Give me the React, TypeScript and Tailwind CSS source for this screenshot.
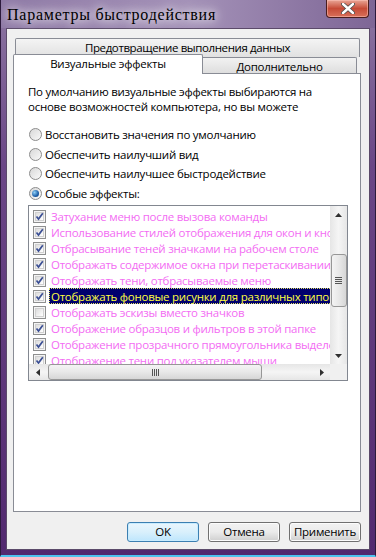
import React from "react";

const items: { text: string; checked: boolean; selected?: boolean }[] = [
  { text: "Затухание меню после вызова команды", checked: true },
  { text: "Использование стилей отображения для окон и кнопок", checked: true },
  { text: "Отбрасывание теней значками на рабочем столе", checked: true },
  { text: "Отображать содержимое окна при перетаскивании", checked: true },
  { text: "Отображать тени, отбрасываемые меню", checked: true },
  { text: "Отображать фоновые рисунки для различных типов папок", checked: true, selected: true },
  { text: "Отображать эскизы вместо значков", checked: false },
  { text: "Отображение образцов и фильтров в этой папке", checked: true },
  { text: "Отображение прозрачного прямоугольника выделения", checked: true },
  { text: "Отображение тени под указателем мыши", checked: true },
];

function CheckBox({ checked }: { checked: boolean }) {
  return (
    <div className="w-[13px] h-[13px] shrink-0 border border-[#8e8f8f] bg-[#f4f4f4] p-[1px]">
      <div className="w-full h-full bg-gradient-to-br from-[#dcdcdc] to-[#ffffff] border border-[#d0d0d0] relative">
        {checked && (
          <svg viewBox="0 0 9 9" className="absolute -left-[1px] -top-[1px] w-[9px] h-[9px]">
            <path d="M1.5 4.5 L3.5 7 L7.8 1.2" fill="none" stroke="#3b4f94" strokeWidth="1.7" />
          </svg>
        )}
      </div>
    </div>
  );
}

function Radio({ checked }: { checked: boolean }) {
  return (
    <div className="w-[13px] h-[13px] shrink-0 rounded-full border border-[#8c8c8c] bg-gradient-to-br from-[#d8d8d8] to-[#fafafa] flex items-center justify-center">
      {checked && (
        <div className="w-[7px] h-[7px] rounded-full bg-[radial-gradient(circle_at_35%_35%,#8fd0f7,#1d5fa8_60%,#0b3c7a)]" />
      )}
    </div>
  );
}

function Tri({ dir }: { dir: "up" | "down" | "left" | "right" }) {
  const pts =
    dir === "up"
      ? "0,4 3.5,0 7,4"
      : dir === "down"
      ? "0,0 3.5,4 7,0"
      : dir === "left"
      ? "4,0 0,3.5 4,7"
      : "0,0 4,3.5 0,7";
  const isV = dir === "up" || dir === "down";
  return (
    <svg viewBox={isV ? "0 0 7 4" : "0 0 4 7"} className={isV ? "w-[7px] h-[4px]" : "w-[4px] h-[7px]"}>
      <polygon points={pts} fill="#303030" />
    </svg>
  );
}

function WinButton({ label, def }: { label: string; def?: boolean }) {
  return (
    <div
      className={
        "w-[72px] h-[20px] rounded-[3px] border flex items-center justify-center text-black " +
        (def
          ? "border-[#3c7fb1] bg-gradient-to-b from-[#eaf6fd] via-[#d9f0fc] to-[#bee6fd] shadow-[inset_0_0_0_1px_#c8ecff]"
          : "border-[#707070] bg-gradient-to-b from-[#f2f2f2] via-[#ebebeb] to-[#cfcfcf] shadow-[inset_0_0_0_1px_#fcfcfc]")
      }
    >
      {label}
    </div>
  );
}

export default function App() {
  return (
    <div
      className="w-[376px] h-[557px] flex flex-col overflow-hidden bg-gradient-to-b from-[#8d77a2] via-[#6a4686] via-30% to-[#52296f] border-l border-r border-[#2c1a3c] border-b-[2px] border-b-[#4ec4ee]"
      style={{ fontFamily: '"Open Sans", "Noto Sans", sans-serif' }}
    >
      {/* Title bar */}
      <div className="h-[28px] shrink-0 flex items-start relative bg-gradient-to-r from-[#8f7aa6] via-[#a492b8] to-[#7e6696]">
        <div
          className="pl-[6px] pt-[6px] text-[16px] leading-[18px] text-black tracking-[0.75px] [text-shadow:0_0_8px_#ffffff,0_0_14px_#ffffff]"
          style={{ fontFamily: '"Liberation Serif", serif' }}
        >
          Параметры быстродействия
        </div>
        <div className="flex-1" />
        <div className="mr-[6px] w-[43px] h-[18px] rounded-b-[4px] border border-t-0 border-[#4a1d1d] bg-gradient-to-b from-[#e8a596] via-[#c64a36] to-[#d8705a] flex items-center justify-center shadow-[inset_0_0_0_1px_rgba(255,200,190,0.5)]">
          <svg viewBox="0 0 14 11" className="w-[14px] h-[11px]">
            <path d="M2 1 L12 10 M12 1 L2 10" stroke="#4a4a4a" strokeWidth="4" strokeLinecap="round" />
            <path d="M2 1 L12 10 M12 1 L2 10" stroke="#ffffff" strokeWidth="2.4" strokeLinecap="round" />
          </svg>
        </div>
      </div>

      {/* Client area */}
      <div className="mx-[5px] h-[522px] shrink-0 border border-[#5b4a6a] bg-[#f0f0f0] flex flex-col pt-[9px] pl-[6px] pr-[8px] text-[11.5px] tracking-[-0.25px] text-black">
        {/* Tabs */}
        <div className="flex flex-col">
          <div className="ml-[2px] mr-[1px] h-[19px] border border-[#898c95] border-b-0 rounded-t-[2px] bg-gradient-to-b from-[#f4f4f4] to-[#e1e1e1] flex justify-center pt-[1px] leading-[16px] tracking-[-0.4px]">
            Предотвращение выполнения данных
          </div>
          <div className="flex items-end h-[16px]">
            <div className="relative z-10 w-[190px] h-[20px] -mb-[1px] bg-white border border-b-0 border-[#898c95] rounded-t-[2px] flex justify-center pt-[1px] leading-[16px]">
              Визуальные эффекты
            </div>
            <div className="w-[154px] h-[16px] border-t border-r border-[#898c95] rounded-tr-[2px] bg-gradient-to-b from-[#f2f2f2] to-[#dedede] flex justify-center leading-[16px] pt-[1px]">
              Дополнительно
            </div>
          </div>
        </div>

        {/* Panel */}
        <div className="h-[439px] shrink-0 border border-[#898c95] bg-white pl-[14px] pt-[10px] flex flex-col">
          <div className="leading-[15px]">
            <div>По умолчанию визуальные эффекты выбираются на</div>
            <div>основе возможностей компьютера, но вы можете</div>
          </div>
          <div className="mt-[11px] flex flex-col">
            {[
              ["Восстановить значения по умолчанию", false],
              ["Обеспечить наилучший вид", false],
              ["Обеспечить наилучшее быстродействие", false],
              ["Особые эффекты:", true],
            ].map(([t, c]) => (
              <div key={t as string} className="h-[19.5px] flex items-center gap-[3px] pl-[1px]">
                <Radio checked={c as boolean} />
                <span className="leading-[15px]">{t as string}</span>
              </div>
            ))}
          </div>

          {/* List box */}
          <div className="mt-[2px] w-[320px] h-[176px] border border-[#828790] flex flex-col">
            <div className="flex h-[158px]">
              <div className="w-[301px] overflow-hidden pt-[2px]">
                {items.map((it) => (
                  <div key={it.text} className="h-[16px] flex items-center pl-[4px] whitespace-nowrap">
                    <CheckBox checked={it.checked} />
                    <span
                      className={
                        "ml-[3px] px-[2px] leading-[15px] h-[16px] flex items-center " +
                        (it.selected
                          ? "bg-[#00006e] text-[#ffff40] outline outline-1 outline-dotted outline-[#e0e060] -outline-offset-1"
                          : "text-[#f36cf3]")
                      }
                    >
                      {it.text}
                    </span>
                  </div>
                ))}
              </div>
              {/* vertical scrollbar */}
              <div className="w-[17px] bg-gradient-to-r from-[#e6e6e6] via-[#f5f5f5] to-[#e6e6e6] flex flex-col items-center">
                <div className="h-[17px] w-full flex items-center justify-center">
                  <Tri dir="up" />
                </div>
                <div className="h-[31px]" />
                <div className="w-[16px] h-[53px] rounded-[3px] border border-[#979797] bg-gradient-to-r from-[#f4f4f4] via-[#e8e8e8] to-[#d6d6d6] flex flex-col items-center justify-center gap-[1px]">
                  <div className="w-[7px] h-[1px] bg-[#555]" />
                  <div className="w-[7px] h-[1px] bg-[#555]" />
                  <div className="w-[7px] h-[1px] bg-[#555]" />
                  <div className="w-[7px] h-[1px] bg-[#555]" />
                </div>
                <div className="flex-1" />
                <div className="h-[17px] w-full flex items-center justify-center">
                  <Tri dir="down" />
                </div>
              </div>
            </div>
            <div className="flex h-[16px]">
              <div className="w-[301px] bg-gradient-to-b from-[#e6e6e6] via-[#f5f5f5] to-[#e6e6e6] flex items-center">
                <div className="w-[17px] h-full flex items-center justify-center">
                  <Tri dir="left" />
                </div>
                <div className="ml-[2px] w-[214px] h-[16px] rounded-[3px] border border-[#979797] bg-gradient-to-b from-[#f4f4f4] via-[#e8e8e8] to-[#d6d6d6] flex items-center justify-center gap-[1px]">
                  <div className="w-[1px] h-[7px] bg-[#555]" />
                  <div className="w-[1px] h-[7px] bg-[#555]" />
                  <div className="w-[1px] h-[7px] bg-[#555]" />
                  <div className="w-[1px] h-[7px] bg-[#555]" />
                </div>
                <div className="flex-1" />
                <div className="w-[17px] h-full flex items-center justify-center">
                  <Tri dir="right" />
                </div>
              </div>
              <div className="w-[17px] bg-[#f0f0f0]" />
            </div>
          </div>
        </div>

        {/* Buttons */}
        <div className="mt-[10px] flex justify-end gap-[9px]">
          <WinButton label="OK" def />
          <WinButton label="Отмена" />
          <WinButton label="Применить" />
        </div>
      </div>
      <div className="flex-1" />
    </div>
  );
}
